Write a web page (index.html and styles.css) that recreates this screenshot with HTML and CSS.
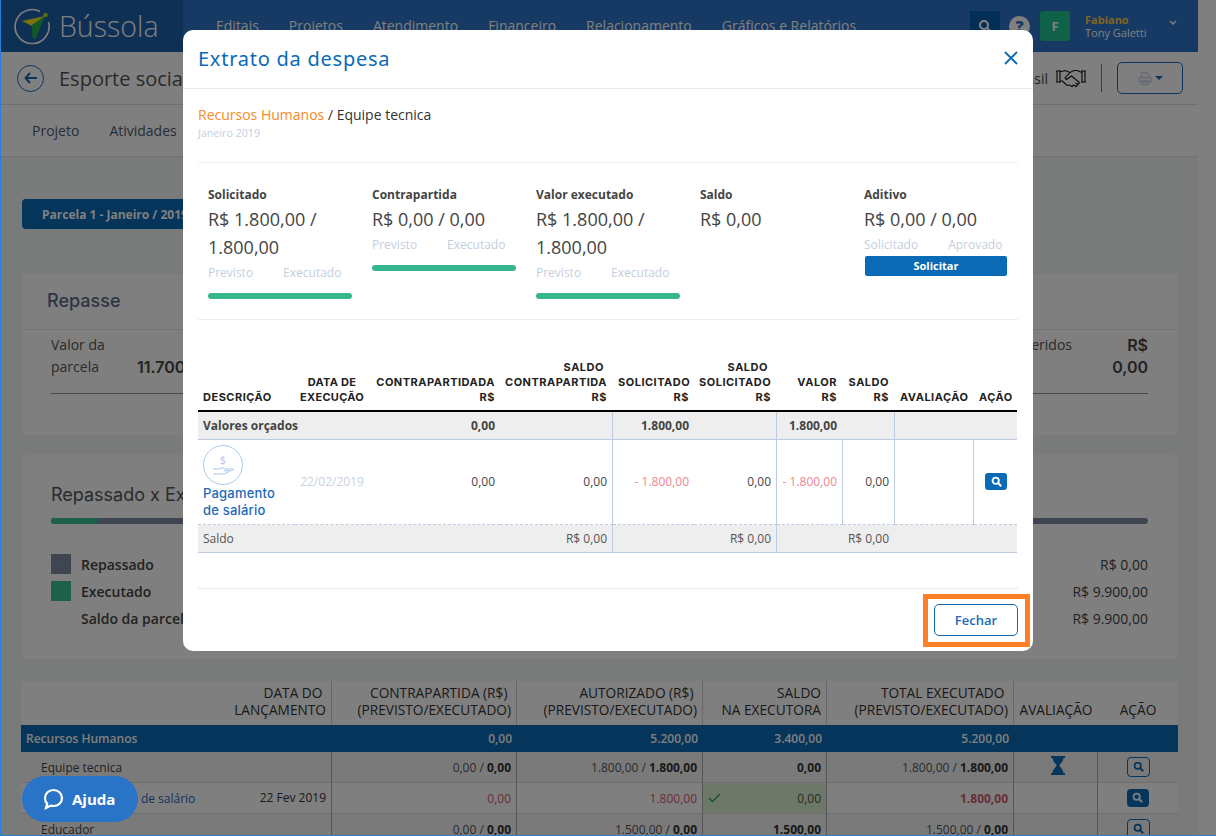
FILE: index.html
```html
<!DOCTYPE html>
<html lang="pt-BR">
<head>
<meta charset="utf-8">
<title>Extrato da despesa</title>
<link rel="stylesheet" href="styles.css">
</head>
<body>
<div class="app">
  <header class="topbar">
    <div class="brand">
      <svg class="brand-logo" width="38" height="38" viewBox="0 0 38 38"><path d="M27 4.500A17 17 0 1 0 35.500 15" fill="none" stroke="#fff" stroke-width="1.600"/><circle cx="32.500" cy="8" r="2.300" fill="#a8e020"/><path d="M9 14 L32 9 L21 20Z" fill="#f6e020"/><path d="M19 18 L32 9 L22.500 32 L19.500 31Z" fill="#22b04a"/></svg>
      <span class="brand-name">Bússola</span>
    </div>
    <nav class="mainnav">
      <span>Editais</span><span>Projetos</span><span>Atendimento</span><span>Financeiro</span><span>Relacionamento</span><span>Gráficos e Relatórios</span>
    </nav>
    <div class="topright">
      <span class="top-search"><svg width="14" height="14" viewBox="0 0 14 14"><circle cx="6" cy="6" r="4" fill="none" stroke="#fff" stroke-width="2.200"/><path d="M9 9l4 4" stroke="#fff" stroke-width="2.400"/></svg></span>
      <span class="top-help">?</span>
      <span class="avatar">F</span>
      <span class="user"><b>Fabiano</b><span>Tony Galetti</span></span>
      <svg class="chev" width="8" height="6" viewBox="0 0 8 6"><path d="M1 1l3 3 3-3" fill="none" stroke="#fff" stroke-width="1.400"/></svg>
    </div>
  </header>
  <div class="subhead">
    <span class="back"><svg width="14" height="12" viewBox="0 0 14 12"><path d="M6 1L1.500 6 6 11M2 6h11" fill="none" stroke="#1c69b8" stroke-width="2"/></svg></span>
    <span class="subtitle">Esporte social</span>
    <span class="org">Brasil</span>
    <svg class="shake" width="32" height="20" viewBox="0 0 32 20" fill="none" stroke="#111" stroke-width="1.100"><path d="M1 3h4M1 14h4M5 2v13M27 2v13M27 3h4M27 14h4M2 3v11M30 3v11"/><path d="M5 4l5-1.500 5 2 4-2 3 0 5 2M15 4.500l-5 5.500 1.500 1.500 5-3.500 8 6.500-1.500 2-2.500-1.500M22.500 17l-1.500 1.500-2.500-1.500-1.500 1.500-3-1.500-2 .5-2-2-2.500-2.500L5 13"/></svg>
    <span class="vsep"></span>
    <span class="printbtn"><svg width="14" height="15" viewBox="0 0 14 15" fill="none" stroke="#cfd6e4" stroke-width="1.300"><path d="M3.500 6V1.500h5L10.500 4v2M1 6.500h12V11H1zM3.500 9.500h7v4h-7z"/></svg><i class="caret"></i></span>
  </div>
  <div class="tabs"><span>Projeto</span><span>Atividades</span></div>
  <main class="content">
    <button class="parcela">Parcela 1 - Janeiro / 2019</button>
    <section class="card repasse">
      <h2 class="card-title">Repasse</h2>
      <div class="rep-body">
        <div class="rep-col">
          <div class="rep-row"><span class="rep-label">Valor da parcela</span><b class="rep-val">11.700,00</b></div>
        </div>
        <div class="rep-col rep-right">
          <div class="rep-row"><span class="rep-label">Valores transferidos</span><b class="rep-val">R$ 0,00</b></div>
        </div>
      </div>
    </section>
    <section class="card repassado">
      <h2 class="rx-title">Repassado x Executado</h2>
      <div class="rx-bar"><span class="rx-fill"></span></div>
      <div class="legend"><i class="sq sq-dark"></i><span class="leg-name">Repassado</span><span class="leg-val">R$ 0,00</span></div>
      <div class="legend"><i class="sq sq-green"></i><span class="leg-name">Executado</span><span class="leg-val">R$ 9.900,00</span></div>
      <div class="legend"><i class="sq"></i><span class="leg-name">Saldo da parcela</span><span class="leg-val">R$ 9.900,00</span></div>
    </section>
    <table class="ledger">
      <thead>
        <tr>
          <th class="l1"></th>
          <th class="l2">DATA DO&nbsp;<br>LANÇAMENTO</th>
          <th class="l3">CONTRAPARTIDA (R$)&nbsp;<br>(PREVISTO/EXECUTADO)</th>
          <th class="l4">AUTORIZADO (R$)&nbsp;<br>(PREVISTO/EXECUTADO)</th>
          <th class="l5">SALDO<br>NA EXECUTORA</th>
          <th class="l6">TOTAL EXECUTADO&nbsp;<br>(PREVISTO/EXECUTADO)</th>
          <th class="l7">AVALIAÇÃO</th>
          <th class="l8">AÇÃO</th>
        </tr>
      </thead>
      <tbody>
        <tr class="l-group"><td colspan="2">Recursos Humanos</td><td>0,00</td><td>5.200,00</td><td>3.400,00</td><td>5.200,00</td><td></td><td></td></tr>
        <tr class="l-sub">
          <td colspan="2" class="indent">Equipe tecnica</td><td>0,00 / <b>0,00</b></td><td>1.800,00 / <b>1.800,00</b></td><td><b>0,00</b></td><td>1.800,00 / <b>1.800,00</b></td>
          <td class="ctr"><svg class="hourglass" width="14" height="19" viewBox="0 0 14 19"><path d="M0 0h14v2h-1.500C12 6.500 8.500 8 8.500 9.500S12 12.500 12.500 17H14v2H0v-2h1.500C2 12.500 5.500 11 5.500 9.500S2 6.500 1.500 2H0z" fill="#0a6ab5"/></svg></td>
          <td class="ctr"><span class="mini mini-o"><svg width="11" height="11" viewBox="0 0 14 14"><circle cx="6" cy="6" r="4" fill="none" stroke="#0a6ab5" stroke-width="2.200"/><path d="M9 9l4 4" stroke="#0a6ab5" stroke-width="2.400"/></svg></span></td>
        </tr>
        <tr class="l-item">
          <td class="item-name"><a>Pagamento de salário</a></td><td class="item-date">22 Fev 2019</td><td class="red">0,00</td><td class="red">1.800,00</td>
          <td class="okcell"><svg width="13" height="10" viewBox="0 0 13 10"><path d="M1 5l3.500 3.500L12 1" fill="none" stroke="#25a56a" stroke-width="1.300"/></svg><span>0,00</span></td>
          <td class="red"><b>1.800,00</b></td><td></td>
          <td class="ctr"><span class="mini mini-f"><svg width="11" height="11" viewBox="0 0 14 14"><circle cx="6" cy="6" r="4" fill="none" stroke="#fff" stroke-width="2.200"/><path d="M9 9l4 4" stroke="#fff" stroke-width="2.400"/></svg></span></td>
        </tr>
        <tr class="l-sub">
          <td colspan="2" class="indent">Educador</td><td>0,00 / <b>0,00</b></td><td>1.500,00 / <b>0,00</b></td><td><b>1.500,00</b></td><td>1.500,00 / <b>0,00</b></td><td></td>
          <td class="ctr"><span class="mini mini-o"><svg width="11" height="11" viewBox="0 0 14 14"><circle cx="6" cy="6" r="4" fill="none" stroke="#0a6ab5" stroke-width="2.200"/><path d="M9 9l4 4" stroke="#0a6ab5" stroke-width="2.400"/></svg></span></td>
        </tr>
      </tbody>
    </table>
  </main>
</div>

<div class="overlay"></div>
<div class="frame"></div>

<button class="ajuda"><svg width="21" height="22" viewBox="0 0 21 22"><path d="M10.500 2c4.700 0 8.500 3.400 8.500 8s-3.800 8-8.500 8c-1 0-1.800-.1-2.700-.4L3 20l1.200-4.400C2.800 14.200 2 12.200 2 10c0-4.600 3.800-8 8.500-8z" fill="none" stroke="#fff" stroke-width="2.200"/></svg><span>Ajuda</span></button>

<div class="modal">
  <div class="m-head">
    <h1>Extrato da despesa</h1>
    <svg class="m-close" width="14" height="14" viewBox="0 0 14 14"><path d="M1 1l12 12M13 1L1 13" stroke="#0a6ab5" stroke-width="1.800"/></svg>
  </div>
  <div class="m-body">
    <div class="crumb"><span class="orange">Recursos Humanos</span> / Equipe tecnica</div>
    <div class="month">Janeiro 2019</div>
    <div class="stats">
      <div class="stat">
        <div class="s-label">Solicitado</div>
        <div class="s-val">R$ 1.800,00 / 1.800,00</div>
        <div class="s-cap"><span>Previsto</span><span>Executado</span></div>
        <div class="s-bar"></div>
      </div>
      <div class="stat">
        <div class="s-label">Contrapartida</div>
        <div class="s-val">R$ 0,00 / 0,00</div>
        <div class="s-cap"><span>Previsto</span><span>Executado</span></div>
        <div class="s-bar"></div>
      </div>
      <div class="stat">
        <div class="s-label">Valor executado</div>
        <div class="s-val">R$ 1.800,00 / 1.800,00</div>
        <div class="s-cap"><span>Previsto</span><span>Executado</span></div>
        <div class="s-bar"></div>
      </div>
      <div class="stat">
        <div class="s-label">Saldo</div>
        <div class="s-val">R$ 0,00</div>
      </div>
      <div class="stat">
        <div class="s-label">Aditivo</div>
        <div class="s-val">R$ 0,00 / 0,00</div>
        <div class="s-cap"><span>Solicitado</span><span>Aprovado</span></div>
        <button class="s-btn">Solicitar</button>
      </div>
    </div>
    <table class="extrato">
      <thead>
        <tr>
          <th class="c1 left">DESCRIÇÃO</th>
          <th class="c2 mid">DATA DE<br>EXECUÇÃO</th>
          <th class="c3">CONTRAPARTIDADA<br>R$</th>
          <th class="c4"><span class="ctr-line">SALDO</span><br>CONTRAPARTIDA<br>R$</th>
          <th class="c5">SOLICITADO<br>R$</th>
          <th class="c6"><span class="ctr-line">SALDO</span><br>SOLICITADO<br>R$</th>
          <th class="c7">VALOR<br>R$</th>
          <th class="c8">SALDO<br>R$</th>
          <th class="c9 mid">AVALIAÇÃO</th>
          <th class="c10 mid">AÇÃO</th>
        </tr>
      </thead>
      <tbody>
        <tr class="r-budget">
          <td colspan="2" class="left">Valores orçados</td><td>0,00</td><td class="vr"></td><td>1.800,00</td><td class="vr"></td><td class="p6">1.800,00</td><td class="vr"></td><td colspan="2"></td>
        </tr>
        <tr class="r-item">
          <td class="left desc">
            <svg class="pay" width="40" height="40" viewBox="0 0 40 40" fill="none" stroke="#a9c9ee"><circle cx="20" cy="20" r="19.500"/><path d="M10 24h6c2-1.500 4-1.500 6 0h3c1 0 1 1.800 0 1.800h-4M10 29h11l9.500-4.500c-1-1.200-2.200-1.200-3.500-.5l-2.500 1.200" stroke-width="1"/><text x="20" y="19" text-anchor="middle" class="pay-sign">$</text></svg>
            <a>Pagamento de salário</a>
          </td>
          <td class="date up">22/02/2019</td>
          <td class="up">0,00</td><td class="vr up">0,00</td><td class="neg up">- 1.800,00</td><td class="vr up">0,00</td><td class="neg vr up">- 1.800,00</td><td class="vr up">0,00</td><td class="vr"></td>
          <td class="act up"><span class="find"><svg width="11" height="11" viewBox="0 0 14 14"><circle cx="6" cy="6" r="4" fill="none" stroke="#fff" stroke-width="2.400"/><path d="M9 9l4 4" stroke="#fff" stroke-width="2.600"/></svg></span></td>
        </tr>
        <tr class="r-saldo">
          <td colspan="2" class="left">Saldo</td><td></td><td class="vr">R$ 0,00</td><td></td><td class="vr">R$ 0,00</td><td colspan="2" class="p6">R$ 0,00</td><td colspan="2"></td>
        </tr>
      </tbody>
    </table>
  </div>
  <div class="m-foot">
    <button class="fechar">Fechar</button>
    <span class="mark"></span>
  </div>
</div>
</body>
</html>
```
FILE: styles.css
```css
* { box-sizing: border-box; }
html, body { margin: 0; height: 836px; overflow: hidden; }
body { font-family: "Open Sans", "Noto Sans", sans-serif; font-size: 12px; color: #333; background: #fff; }
button { font-family: inherit; }

.app { width: 1198px; height: 836px; overflow: hidden; background: #f3f6f6; }

.topbar { height: 52px; background: #2c74c6; display: flex; align-items: stretch; color: #fff; }
.brand { width: 183px; background: #1e60aa; display: flex; align-items: center; padding-left: 13px; gap: 8px; flex: none; }
.brand-logo { flex: none; }
.brand-name { font-size: 28.500px; font-weight: 300; font-family: "Open Sans", sans-serif; }
.mainnav { display: flex; gap: 30px; padding: 16px 0 0 33px; font-size: 14px; line-height: 19px; flex: none; }
.topright { margin-left: auto; display: flex; align-items: flex-start; padding-top: 11px; }
.top-search { width: 30px; height: 30px; background: #065caa; display: flex; align-items: center; justify-content: center; }
.top-help { width: 21px; height: 21px; border-radius: 50%; background: #fff; color: #2c74c6; font-weight: 800; font-size: 16px; line-height: 21px; text-align: center; margin: 5px 10px 0 9px; }
.avatar { width: 30px; height: 30px; border-radius: 3px; background: #1fc58f; font-weight: 700; font-size: 13px; line-height: 30px; text-align: center; }
.user { display: flex; flex-direction: column; margin-left: 15px; padding-top: 2px; font-size: 11px; line-height: 13px; width: 84px; }
.user b { color: #ffc84a; }
.chev { margin: 9px 21px 0 0; }

.subhead { height: 53px; background: #fff; border-bottom: 1px solid #d5e3ea; display: flex; align-items: center; padding-left: 17px; }
.back { width: 27px; height: 27px; border-radius: 50%; border: 1px solid #1c69b8; display: flex; align-items: center; justify-content: center; }
.subtitle { font-size: 20px; color: #555; margin-left: 15px; width: 933px; flex: none; }
.org { font-size: 14px; color: #444; width: 56px; flex: none; text-align: right; }
.shake { margin-left: 7px; flex: none; }
.vsep { width: 1px; height: 28px; background: #777; margin-left: 14px; }
.printbtn { width: 66px; height: 32px; border: 1px solid #1c69b8; border-radius: 5px; margin-left: 15px; display: flex; align-items: center; justify-content: center; gap: 3px; }
.caret { width: 0; height: 0; border: 4px solid transparent; border-top: 4px solid #1c69b8; border-bottom: 0; }

.tabs { height: 52px; background: #fff; border-bottom: 1px solid #dde7ea; display: flex; gap: 30px; padding-left: 32px; align-items: center; font-size: 14px; color: #4a5a70; }

.content { padding: 42px 20px 0 22px; }
.parcela { display: block; width: 220px; height: 30px; border: 0; border-radius: 4px; background: #0a6ab5; color: #fff; font-weight: 700; font-size: 12px; text-align: left; padding-left: 20px; }

.card { background: #fff; border-radius: 4px; }
.repasse { margin-top: 45px; height: 161px; }
.card-title { margin: 0; height: 56px; padding: 15px 0 0 25px; font: 500 18px/24px Inter, sans-serif; color: #5d6b85; border-bottom: 1px solid #e3e8ec; }
.rep-body { display: flex; justify-content: space-between; padding: 4px 30px 0 29px; font-size: 14px; line-height: 22px; color: #555; }
.rep-col { width: 400px; }
.rep-row { display: flex; align-items: flex-start; height: 60px; border-bottom: 1px solid #8693ab; }
.rep-label { width: 86px; flex: none; }
.rep-val { font: 600 16px/22px Inter, sans-serif; color: #444; padding-top: 22px; }
.rep-right .rep-row { justify-content: flex-end; }
.rep-right .rep-label { width: auto; white-space: nowrap; margin-right: 76px; }
.rep-right .rep-val { width: 50px; margin-left: -50px; text-align: right; padding-top: 0; }

.repassado { margin-top: 20px; height: 204px; padding: 0 30px 0 29px; }
.rx-title { margin: 0; padding-top: 27px; font: 400 18px/26px Inter, sans-serif; color: #555; }
.rx-bar { height: 6px; border-radius: 3px; background: #7f8aa3; margin: 10px 0 30px; overflow: hidden; }
.rx-fill { display: block; width: 46px; height: 6px; background: #3cc090; }
.legend { display: flex; align-items: center; height: 20px; margin-bottom: 7px; font-size: 14px; color: #444; }
.sq { width: 20px; height: 20px; flex: none; margin-right: 10px; }
.sq-dark { background: #7f8aa3; }
.sq-green { background: #3cc090; }
.leg-name { font-weight: 600; }
.leg-val { margin-left: auto; }

.ledger { margin: 22px 0 0 -1px; width: 1157px; table-layout: fixed; border-collapse: separate; border-spacing: 0; font-size: 12px; color: #555; }
.ledger th { background: #fff; height: 44px; padding: 0 5px 7px; text-align: right; vertical-align: bottom; font: 400 13.700px/17px "Open Sans", sans-serif; color: #333; border-right: 1px solid #ccc; white-space: nowrap; }
.l1 { width: 200px; border-right: 0 !important; }
.l2 { width: 111px; }
.l3 { width: 185px; }
.l4 { width: 186px; }
.l5 { width: 124px; }
.l6 { width: 187px; }
.l7 { width: 84px; text-align: center !important; border-right: 0 !important; }
.l8 { text-align: center !important; border-right: 0 !important; }
.ledger td { padding: 0 5px; text-align: right; border-right: 1px solid #aaa; border-bottom: 1px solid #ddd; height: 31px; }
.ledger b { color: #333; }
.l-group td { background: #0a6ab5; color: #fff; font-weight: 600; height: 27px; border: 0; }
.l-group td:first-child { text-align: left; }
.l-sub td { background: #f4f5f5; }
.l-sub td.indent { text-align: left; padding-left: 20px; color: #444; }
.l-sub td:last-child, .l-item td:last-child { border-right: 0; }
.l-item td { background: #fff; }
.item-name { text-align: left !important; padding-left: 53px !important; border-right: 0 !important; white-space: nowrap; overflow: visible; font-size: 12px; }
.item-name a { color: #1c69b8; }
.item-date { color: #333; padding-bottom: 2px !important; }
.ledger .red, .ledger .red b { color: #d25c6c; }
.okcell { background: #dcf0d0 !important; text-align: right; }
.okcell svg { float: left; margin-top: 3px; }
.ctr { text-align: center !important; }
.ledger td.ctr svg.hourglass { display: block; margin: -3px auto 0; position: relative; left: 2px; }
.mini { display: inline-block; vertical-align: middle; border-radius: 4px; text-align: left; }
.mini svg { display: block; }
.mini-o { width: 23px; height: 20px; border: 1px solid #0a6ab5; padding: 3px 0 0 5px; }
.mini-f { width: 22px; height: 18px; background: #0a6ab5; padding: 3px 0 0 5px; }

.overlay { position: fixed; inset: 0; background: rgba(0, 0, 0, .5); }
.frame { position: fixed; inset: 0; border-left: 1px solid #2a80d8; border-bottom: 1px solid #2a80d8; pointer-events: none; }

.ajuda { position: fixed; left: 22px; top: 776px; width: 116px; height: 46px; border: 0; border-radius: 23px; background: #2a74c8; color: #fff; font-size: 15px; font-weight: 700; display: flex; align-items: center; gap: 8px; padding: 0 0 0 21px; }

.modal { position: fixed; left: 183px; top: 30px; width: 850px; height: 621px; background: #fff; border-radius: 10px; }
.m-head { height: 59px; border-bottom: 1px solid #e8e8e8; display: flex; align-items: center; justify-content: space-between; padding: 0 15px; }
.m-head h1 { margin: 0; font: 400 20px/28px "Noto Sans", sans-serif; letter-spacing: .75px; color: #0a6ab5; }
.m-close { margin-bottom: 3px; }
.m-body { padding: 16px 15px 0; }
.crumb { font-size: 14px; line-height: 20px; color: #333; }
.orange { color: #f58a2a; }
.month { margin-top: 1px; font-size: 10.700px; line-height: 14px; color: #c4cee0; padding-bottom: 22px; border-bottom: 1px solid #eee; }
.stats { display: grid; grid-template-columns: repeat(5, 164px); height: 157px; border-bottom: 1px solid #eee; padding-top: 24px; }
.stat { padding: 0 10px; }
.s-label { font-size: 12px; line-height: 16px; font-weight: 700; color: #444; margin-bottom: 2px; }
.s-val { font-size: 18px; line-height: 28px; color: #444; }
.s-cap { display: flex; gap: 30px; margin-top: 4px; font-size: 12px; line-height: 16px; color: #c4cee0; white-space: nowrap; }
.s-bar { width: 144px; height: 6px; margin-top: 12px; border-radius: 3px; background: #36b58e; }
.s-btn { display: block; width: 142px; height: 20px; margin: 3px 0 0 1px; padding: 0 0 2px; border: 0; border-radius: 2px; background: #0a6ab5; color: #fff; font-size: 11px; font-weight: 700; }

.extrato { width: 819px; margin-top: 40px; table-layout: fixed; border-collapse: separate; border-spacing: 0; font-size: 12px; color: #444; }
.extrato th { padding: 0 5px 5px; vertical-align: bottom; text-align: right; font: 700 11px/15px Inter, sans-serif; letter-spacing: .5px; color: #222; border-bottom: 2px solid #000; white-space: nowrap; }
.extrato th.left { text-align: left; }
.extrato th.mid { text-align: center; padding-right: 6px; }
.extrato th.c2 { letter-spacing: .3px; padding: 0 5px 5px; }
.extrato th.c4, .extrato th.c6, .extrato th.c7, .extrato th.c8 { padding-right: 6px; }
.ctr-line { display: inline-block; padding-right: 3px; }
.c1 { width: 97px; }
.c2 { width: 74px; }
.c3 { width: 131px; }
.c4 { width: 113px; }
.c5 { width: 81px; }
.c6 { width: 83px; }
.c7 { width: 66px; }
.c8 { width: 52px; }
.c9 { width: 79px; }
.c10 { width: 43px; }
.extrato td { padding: 0 5px; text-align: right; }
.extrato td.left { text-align: left; }
.extrato td.p6 { padding-right: 6px; }
.extrato td.up { padding-bottom: 2px; }
.extrato .vr { border-right: 1px solid #bccbdf; }
.r-budget td { height: 28px; background: #eee; border-bottom: 1px solid #bccbdf; font-weight: 700; color: #444; }
.r-item td { height: 85px; border-bottom: 1px dashed #bccbdf; }
.r-saldo td { height: 28px; background: #eee; border-bottom: 1px solid #bccbdf; color: #555; }
.extrato td.desc { padding-top: 5px; padding-bottom: 5px; vertical-align: top; }
.desc a { display: block; font: 500 13px/17px Inter, sans-serif; letter-spacing: .2px; color: #1c69b8; }
.pay { display: block; }
.pay-sign { font: 400 11px "Open Sans", sans-serif; fill: #a9c9ee; stroke: none; }
.extrato td.date { color: #c8d2e0; text-align: center; }
.neg { color: #ef8592; }
.extrato td.act { text-align: center; }
.find { display: inline-block; width: 22px; height: 17px; border-radius: 3px; background: #0a6ab5; padding: 3px 0 0 6px; vertical-align: middle; }
.find svg { display: block; }

.m-foot { margin: 35px 15px 0; padding-top: 15px; border-top: 1px solid #e2eaf3; display: flex; justify-content: flex-end; }
.fechar { width: 84px; height: 32px; border: 1px solid #0a6ab5; border-radius: 5px; background: #fff; color: #1c69b8; font-size: 13px; font-weight: 600; }
.mark { position: absolute; left: 740px; top: 564px; width: 107px; height: 53px; border: 5px solid #ff7f27; pointer-events: none; }
```
